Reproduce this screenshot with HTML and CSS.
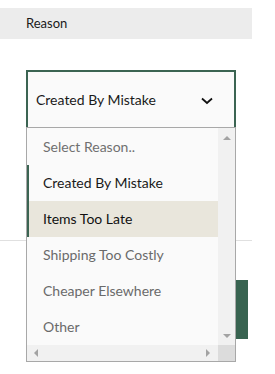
FILE: index.html
```html
<!DOCTYPE html>
<html>
<head>
<meta charset="utf-8">
<link rel="stylesheet" href="styles.css">
</head>
<body>
<div class="page">
  <div class="header">Reason</div>
  <div class="select">
    <span class="select-value">Created By Mistake</span>
    <svg class="chevron" width="12" height="8" viewBox="0 0 12 8"><path d="M1 1.5 L6 6 L11 1.5" fill="none" stroke="#111" stroke-width="1.8"/></svg>
  </div>
  <div class="divider"></div>
  <div class="button-row"><div class="button"></div></div>

  <div class="dropdown">
    <div class="list">
      <div class="option placeholder">Select Reason..</div>
      <div class="option selected">Created By Mistake</div>
      <div class="option hover">Items Too Late</div>
      <div class="option">Shipping Too Costly</div>
      <div class="option">Cheaper Elsewhere</div>
      <div class="option">Other</div>
    </div>
    <div class="vscroll">
      <span class="arrow up"></span>
      <span class="arrow down"></span>
    </div>
    <div class="hscroll">
      <span class="arrow left"></span>
      <span class="arrow right"></span>
    </div>
    <div class="corner"></div>
  </div>
</div>
</body>
</html>
```
FILE: styles.css
```css
* { box-sizing: border-box; }
html, body { margin: 0; padding: 0; background: #fff; }
body { font-family: Lato, "Noto Sans", sans-serif; color: #222; }
.page { position: relative; width: 275px; height: 374px; overflow: hidden; padding-top: 8px; }
.header {
  width: 252px; height: 31px; background: #ececec;
  padding-left: 26px; font-size: 13px; line-height: 31px; color: #1a1a1a;
}
.select {
  margin: 31px 0 0 26px; width: 210px; height: 57px;
  border: 2px solid #3b6452; border-bottom: none; background: #fafafa;
  display: flex; align-items: center; justify-content: space-between;
  padding: 0 21px 0 8px;
}
.select-value { font-size: 14px; color: #1a1a1a; }
.chevron { display: block; margin-top: 2px; }
.divider { margin-top: 113px; width: 252px; height: 1px; background: #e0e0e0; }
.button-row { width: 248px; display: flex; justify-content: flex-end; margin-top: 39px; }
.button { width: 100px; height: 59px; background: #386350; }
.dropdown {
  position: absolute; left: 26px; top: 127px; width: 210px; height: 235px;
  border: 1px solid #a8a8a8; background: #fafafa;
  display: grid; grid-template-columns: 191px 17px; grid-template-rows: 217px 16px;
}
.list { padding-top: 1px; overflow: hidden; }
.option {
  height: 36px; line-height: 35px; padding-left: 14px; font-size: 14px; color: #6a6a6a;
  border-left: 2px solid transparent; white-space: nowrap;
}
.option.placeholder { color: #707070; }
.option.selected { color: #1a1a1a; border-left-color: #3b6452; }
.option.hover { color: #111; background: #e9e6dc; border-left-color: #3b6452; }
.vscroll { background: #f1f1f1; display: flex; flex-direction: column; justify-content: space-between; align-items: center; padding: 8px 0 7px; }
.hscroll { background: #f1f1f1; display: flex; justify-content: space-between; align-items: center; padding: 0 8px 0 7px; }
.corner { background: #dcdcdc; }
.arrow { width: 0; height: 0; border-style: solid; display: block; }
.arrow.up { border-width: 0 4px 4px 4px; border-color: transparent transparent #a3a3a3 transparent; }
.arrow.down { border-width: 4px 4px 0 4px; border-color: #a3a3a3 transparent transparent transparent; }
.arrow.left { border-width: 4px 4px 4px 0; border-color: transparent #a3a3a3 transparent transparent; }
.arrow.right { border-width: 4px 0 4px 4px; border-color: transparent transparent transparent #a3a3a3; }
```
